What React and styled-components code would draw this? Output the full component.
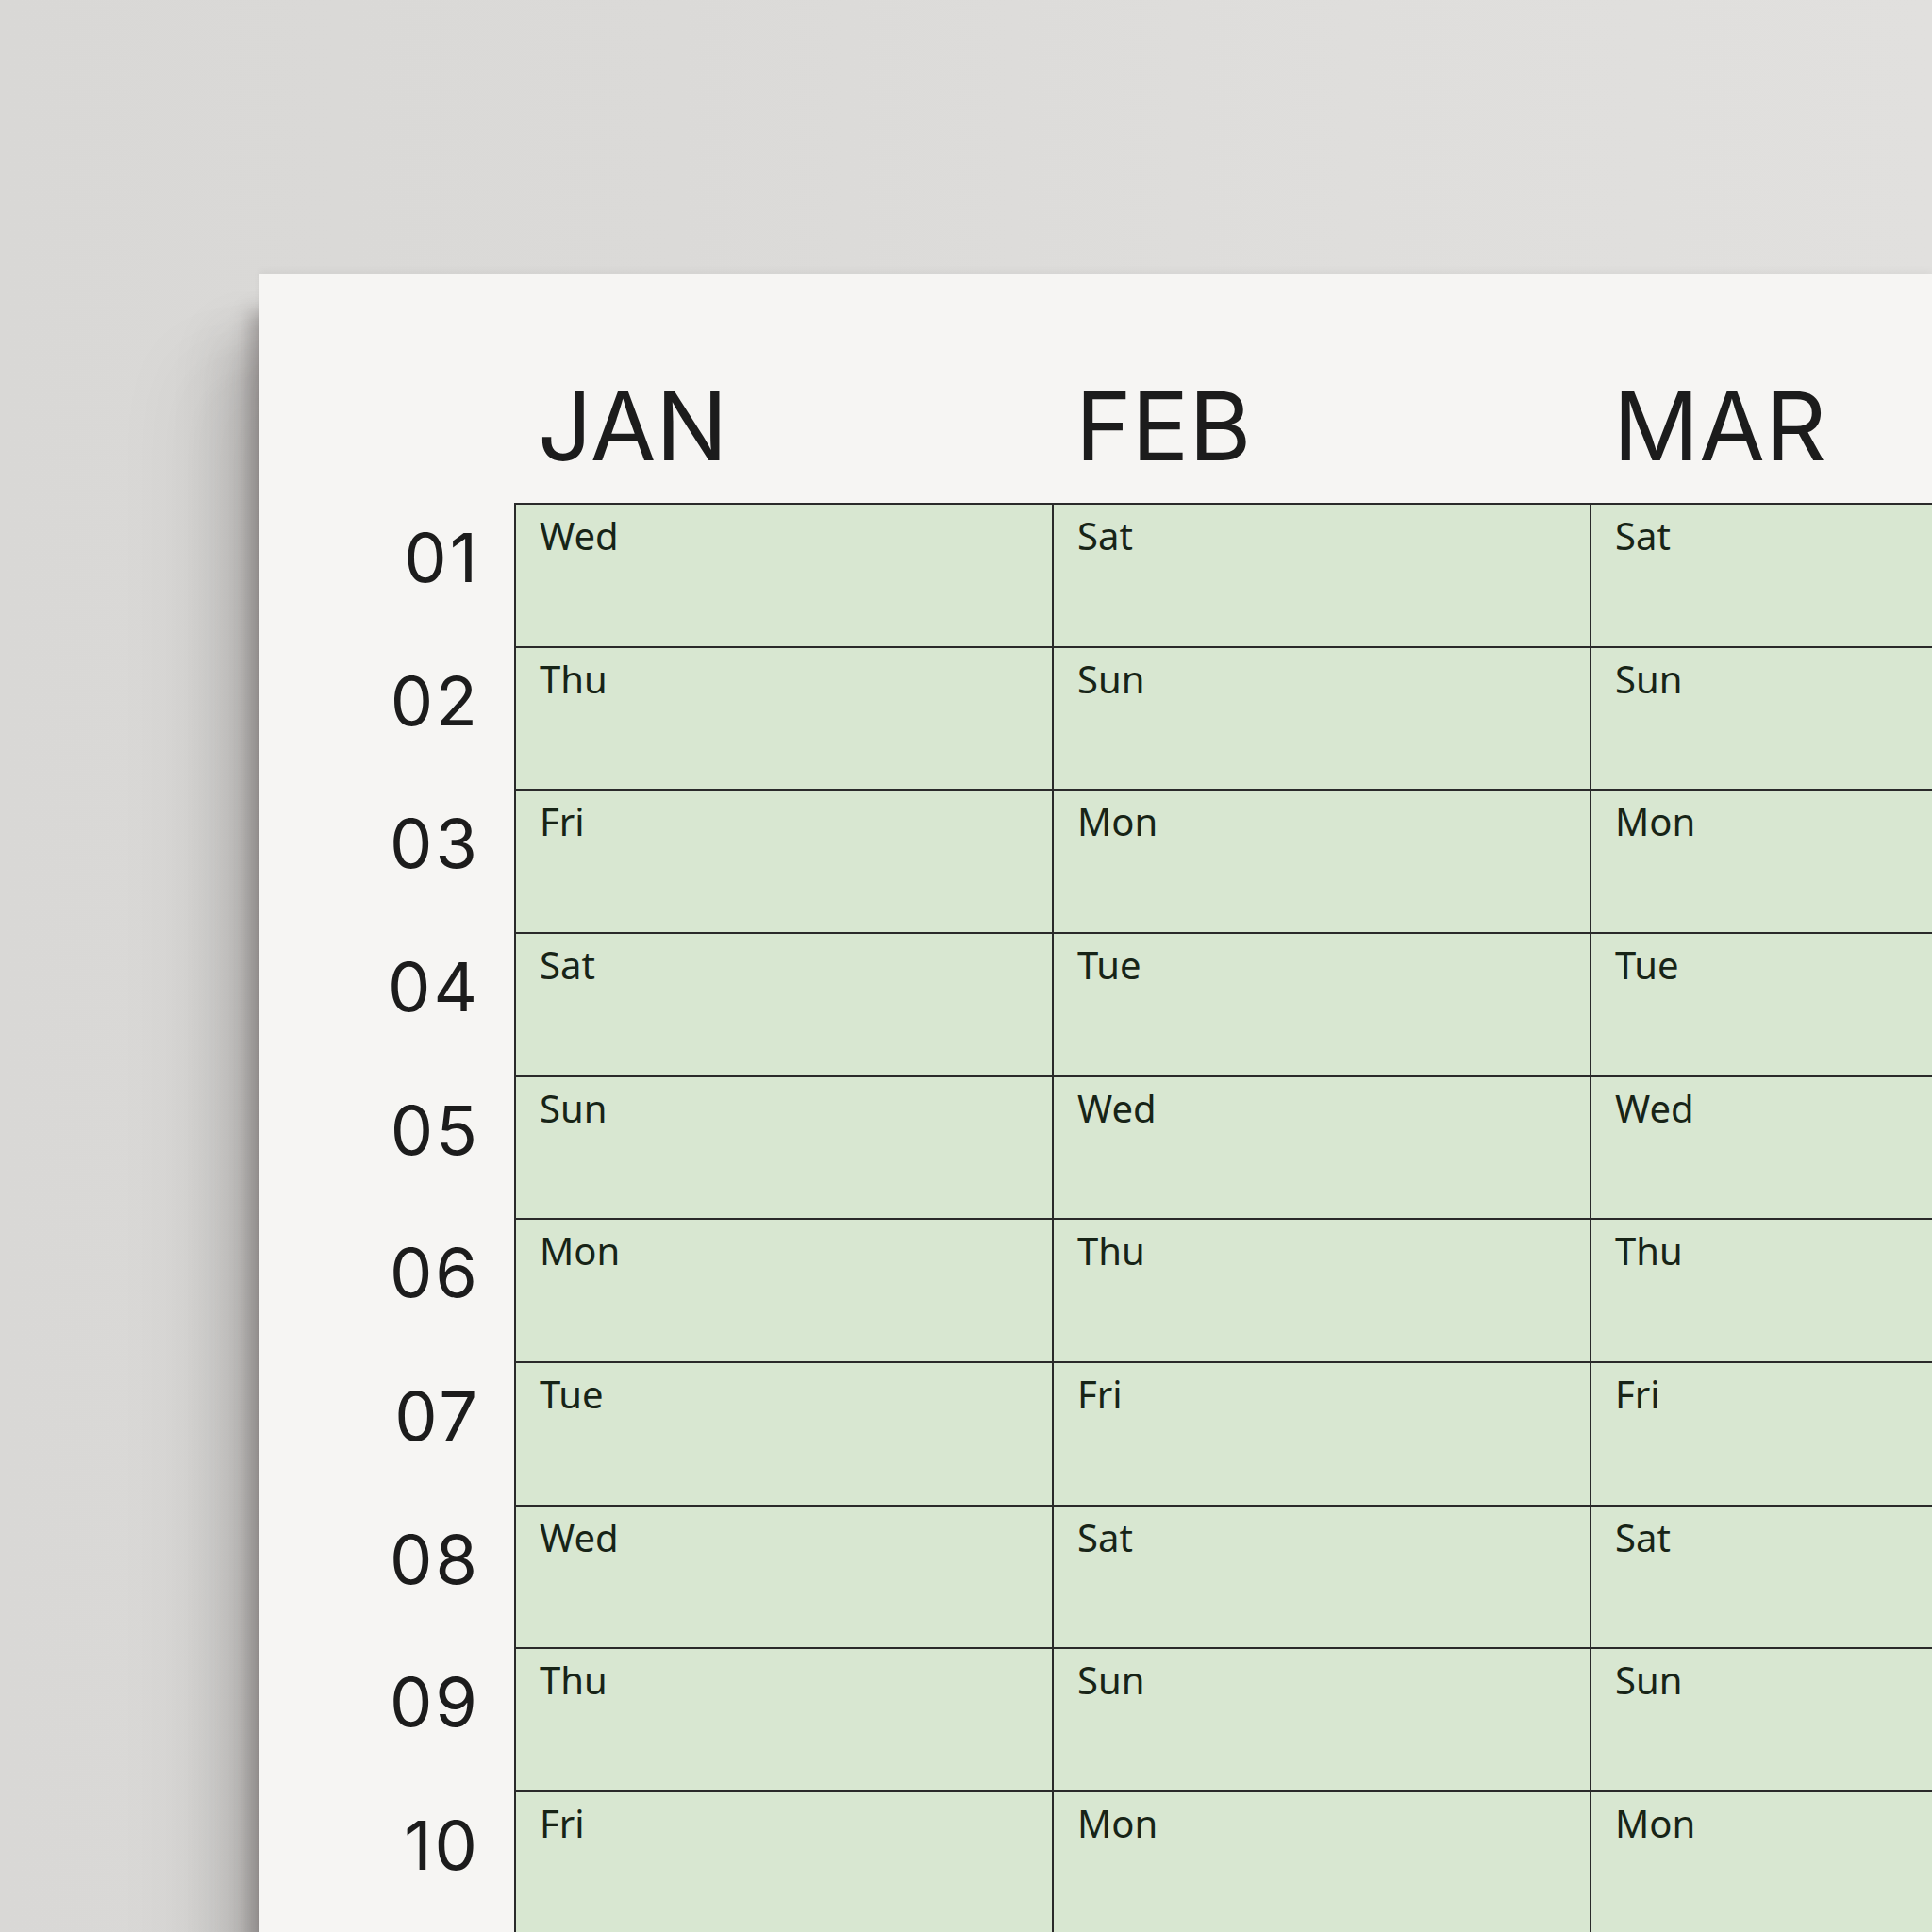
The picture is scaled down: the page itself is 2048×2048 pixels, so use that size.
import React from 'react';
import styled, { createGlobalStyle } from 'styled-components';

const GlobalStyle = createGlobalStyle`
  html, body {
    margin: 0;
    padding: 0;
    background: #dcdbd9;
  }
`;

const Wall = styled.div`
  width: 2048px;
  height: 2048px;
  box-sizing: border-box;
  padding: 290px 0 0 275px;
  overflow: hidden;
  background: linear-gradient(90deg, #d9d8d6 0%, #dbdad8 35%, #dfdedc 70%, #e1e0de 100%);
  font-family: 'Noto Sans', 'Open Sans', sans-serif;
`;

const Paper = styled.div`
  width: 1773px;
  height: 100%;
  background: #f6f5f3;
  overflow: hidden;
  display: flex;
  flex-direction: column;
  box-shadow:
    -10px 40px 18px rgba(70, 62, 62, 0.34),
    -34px 70px 50px rgba(70, 62, 62, 0.22),
    -70px 100px 80px rgba(70, 62, 62, 0.08),
    0 -3px 8px rgba(0, 0, 0, 0.04);
`;

const HeaderRow = styled.div`
  display: grid;
  grid-template-columns: 272px repeat(3, 570px);
  height: 243px;
  flex-shrink: 0;
  align-items: end;
`;

const MonthLabel = styled.div`
  padding: 0 0 31px 23px;
  font-family: Inter, 'Noto Sans', sans-serif;
  font-size: 101px;
  line-height: 1;
  color: #1c1c1c;
  white-space: nowrap;
`;

const Body = styled.div`
  display: flex;
  align-items: flex-start;
`;

const NumberColumn = styled.div`
  width: 270px;
  flex-shrink: 0;
  display: grid;
  grid-auto-rows: 151.67px;
  padding-top: 2px;
`;

const DayNumber = styled.div`
  padding: 20px 36px 0 0;
  text-align: right;
  font-family: Inter, 'Noto Sans', sans-serif;
  font-size: 72px;
  line-height: 1;
  letter-spacing: 3px;
  color: #1c1c1c;
`;

const DayGrid = styled.div`
  display: grid;
  grid-template-columns: repeat(3, 570px);
  grid-auto-rows: 151.67px;
  border-top: 2px solid #2a2a2a;
  border-left: 2px solid #2a2a2a;
  flex-shrink: 0;
`;

const Cell = styled.div`
  box-sizing: border-box;
  background: #d8e7d1;
  border-right: 2px solid #2a2a2a;
  border-bottom: 2px solid #2a2a2a;
  padding: 13px 0 0 25px;
  font-size: 40px;
  line-height: 1;
  color: #172417;
`;

const WEEK = ['Sun', 'Mon', 'Tue', 'Wed', 'Thu', 'Fri', 'Sat'];

const months = [
  { name: 'JAN', start: 3 },
  { name: 'FEB', start: 6 },
  { name: 'MAR', start: 6 },
];

const days = Array.from({ length: 10 }, (_, i) => i + 1);

export default function App() {
  return (
    <>
      <GlobalStyle />
      <Wall>
        <Paper>
          <HeaderRow>
            <div />
            {months.map((m) => (
              <MonthLabel key={m.name}>{m.name}</MonthLabel>
            ))}
          </HeaderRow>
          <Body>
            <NumberColumn>
              {days.map((d) => (
                <DayNumber key={d}>{String(d).padStart(2, '0')}</DayNumber>
              ))}
            </NumberColumn>
            <DayGrid>
              {days.map((d) =>
                months.map((m) => (
                  <Cell key={m.name + d}>{WEEK[(m.start + d - 1) % 7]}</Cell>
                ))
              )}
            </DayGrid>
          </Body>
        </Paper>
      </Wall>
    </>
  );
}
